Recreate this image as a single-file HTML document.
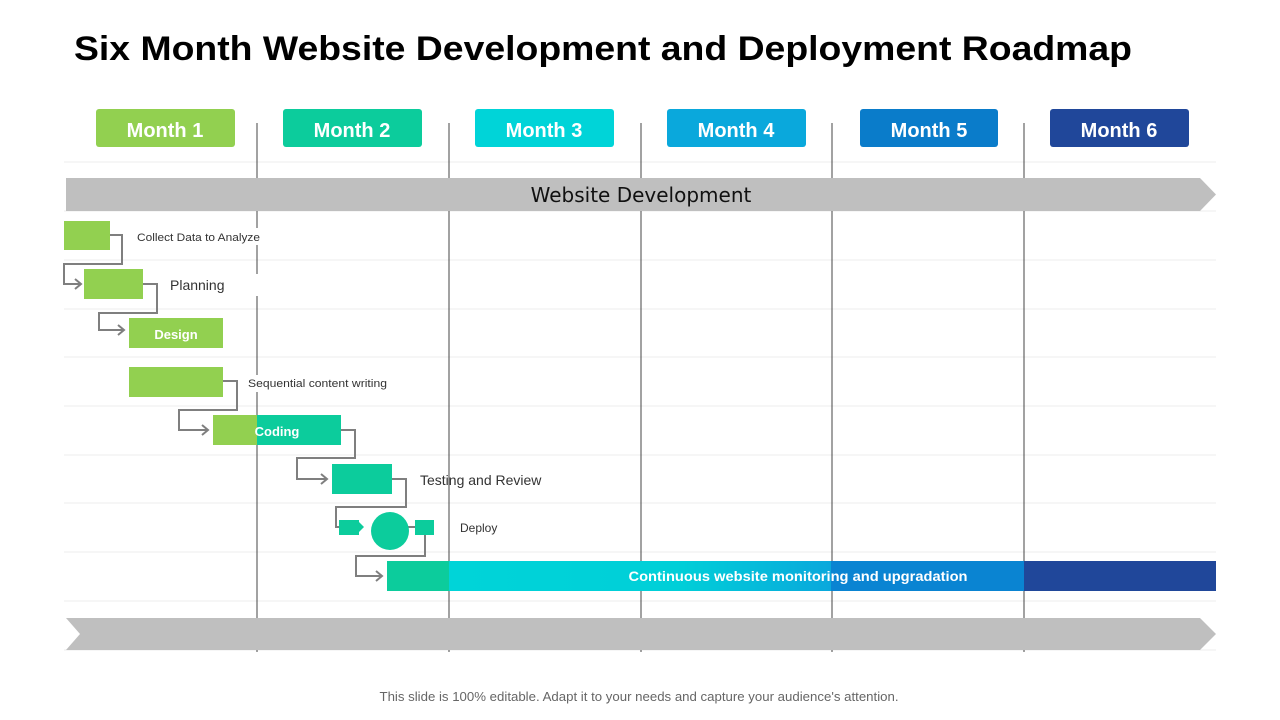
<!DOCTYPE html>
<html><head><meta charset="utf-8"><style>
html,body{margin:0;padding:0;background:#fff;}
svg{display:block;font-family:"Liberation Sans",Arial,sans-serif;}
</style></head><body>
<svg width="1280" height="720" viewBox="0 0 1280 720" xmlns="http://www.w3.org/2000/svg">
<text x="74" y="60" font-size="34" font-weight="bold" fill="#000" textLength="1058" lengthAdjust="spacingAndGlyphs">Six Month Website Development and Deployment Roadmap</text>
<!-- horizontal grid -->
<g stroke="#ececec" stroke-width="1">
<line x1="64" y1="162" x2="1216" y2="162"/>
<line x1="64" y1="211" x2="1216" y2="211"/>
<line x1="64" y1="260" x2="1216" y2="260"/>
<line x1="64" y1="309" x2="1216" y2="309"/>
<line x1="64" y1="357" x2="1216" y2="357"/>
<line x1="64" y1="406" x2="1216" y2="406"/>
<line x1="64" y1="455" x2="1216" y2="455"/>
<line x1="64" y1="503" x2="1216" y2="503"/>
<line x1="64" y1="552" x2="1216" y2="552"/>
<line x1="64" y1="601" x2="1216" y2="601"/>
<line x1="64" y1="650" x2="1216" y2="650"/>
</g>
<!-- vertical lines -->
<g stroke="#444" stroke-width="1">
<line x1="257" y1="123" x2="257" y2="652"/>
<line x1="449" y1="123" x2="449" y2="652"/>
<line x1="641" y1="123" x2="641" y2="652"/>
<line x1="832" y1="123" x2="832" y2="652"/>
<line x1="1024" y1="123" x2="1024" y2="652"/>
</g>
<!-- month boxes -->
<g font-size="20" font-weight="bold" fill="#fff" text-anchor="middle">
<rect x="96" y="109" width="139" height="38" rx="3" fill="#92d050"/><text x="165" y="137">Month 1</text>
<rect x="283" y="109" width="139" height="38" rx="3" fill="#0ccc9c"/><text x="352" y="137">Month 2</text>
<rect x="475" y="109" width="139" height="38" rx="3" fill="#00d4d8"/><text x="544" y="137">Month 3</text>
<rect x="667" y="109" width="139" height="38" rx="3" fill="#0aa8dc"/><text x="736" y="137">Month 4</text>
<rect x="860" y="109" width="138" height="38" rx="3" fill="#0a7cca"/><text x="929" y="137">Month 5</text>
<rect x="1050" y="109" width="139" height="38" rx="3" fill="#20479a"/><text x="1119" y="137">Month 6</text>
</g>
<!-- top arrow bar -->
<polygon points="66,178 1200,178 1216,194.5 1200,211 66,211" fill="#bfbfbf"/>
<text x="641" y="202" font-size="20" fill="#111" text-anchor="middle" font-family="DejaVu Sans, sans-serif">Website Development</text>
<!-- bottom arrow bar -->
<polygon points="66,618 1200,618 1216,634 1200,650 66,650 80,634" fill="#bfbfbf"/>
<!-- connectors -->
<g fill="none" stroke="#7f7f7f" stroke-width="2">
<polyline points="110,235 122,235 122,264 64,264 64,284 80,284"/>
<polyline points="75,279 81,284 75,289"/>
<polyline points="143,284 157,284 157,313 99,313 99,330 124,330"/>
<polyline points="118,325 124,330 118,335"/>
<polyline points="223,381 237,381 237,410 179,410 179,430 208,430"/>
<polyline points="202,425 208,430 202,435"/>
<polyline points="341,430 355,430 355,458 297,458 297,479 327,479"/>
<polyline points="321,474 327,479 321,484"/>
<polyline points="392,479 406,479 406,507 336,507 336,527 340,527"/>
<polyline points="425,535 425,556 356,556 356,576 382,576"/>
<polyline points="376,571 382,576 376,581"/>
<line x1="408" y1="527" x2="415" y2="527"/>
</g>
<polygon points="359,522 364,527 359,532" fill="#0ccc9c"/>
<!-- labels with white bg -->
<rect x="134" y="228" width="128" height="17" fill="#fff"/>
<text x="137" y="241" font-size="11" fill="#333" textLength="123" lengthAdjust="spacingAndGlyphs">Collect Data to Analyze</text>
<rect x="168" y="274" width="90" height="22" fill="#fff"/>
<text x="170" y="290" font-size="14" fill="#333">Planning</text>
<rect x="246" y="375" width="145" height="17" fill="#fff"/>
<text x="248" y="387" font-size="11" fill="#333" textLength="139" lengthAdjust="spacingAndGlyphs">Sequential content writing</text>
<text x="420" y="485" font-size="14" fill="#333">Testing and Review</text>
<text x="460" y="532" font-size="12" fill="#333">Deploy</text>
<!-- task blocks -->
<rect x="64" y="221" width="46" height="29" fill="#92d050"/>
<rect x="84" y="269" width="59" height="30" fill="#92d050"/>
<rect x="129" y="318" width="94" height="30" fill="#92d050"/>
<text x="176" y="339" font-size="13" font-weight="bold" fill="#fff" text-anchor="middle">Design</text>
<rect x="129" y="367" width="94" height="30" fill="#92d050"/>
<rect x="213" y="415" width="44" height="30" fill="#92d050"/>
<rect x="257" y="415" width="84" height="30" fill="#0ccc9c"/>
<text x="277" y="436" font-size="13" font-weight="bold" fill="#fff" text-anchor="middle">Coding</text>
<rect x="332" y="464" width="60" height="30" fill="#0ccc9c"/>
<rect x="339" y="520" width="20" height="15" fill="#0ccc9c"/>
<circle cx="390" cy="531" r="19" fill="#0ccc9c"/>
<rect x="415" y="520" width="19" height="15" fill="#0ccc9c"/>
<!-- long bar -->
<rect x="387" y="561" width="62" height="30" fill="#0ccc9c"/>
<defs><linearGradient id="g1" x1="0" x2="1"><stop offset="0" stop-color="#00d4d8"/><stop offset="0.6" stop-color="#00cfd8"/><stop offset="1" stop-color="#0aa8dc"/></linearGradient></defs>
<rect x="449" y="561" width="382" height="30" fill="url(#g1)"/>
<rect x="831" y="561" width="193" height="30" fill="#0a84d2"/>
<rect x="1024" y="561" width="192" height="30" fill="#20479a"/>
<text x="798" y="581" font-size="14" font-weight="bold" fill="#fff" text-anchor="middle" textLength="339" lengthAdjust="spacingAndGlyphs">Continuous website monitoring and upgradation</text>
<text x="639" y="701" font-size="13" fill="#666" text-anchor="middle" textLength="519" lengthAdjust="spacingAndGlyphs">This slide is 100% editable. Adapt it to your needs and capture your audience's attention.</text>
</svg>
</body></html>
